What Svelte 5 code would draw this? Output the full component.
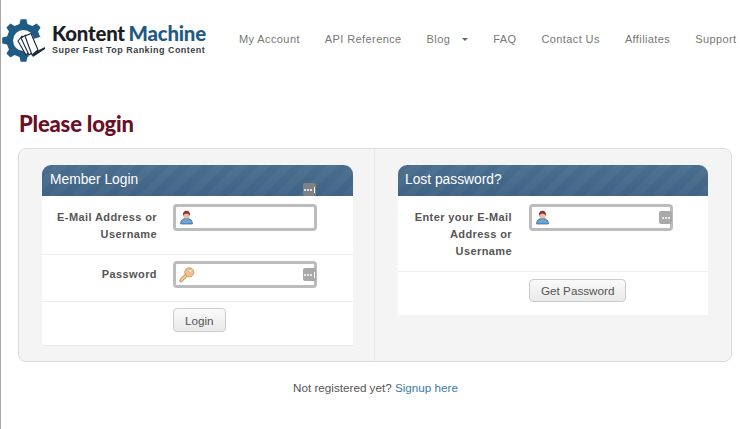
<script>
  const navItems = [
    { label: 'My Account' },
    { label: 'API Reference' },
    { label: 'Blog', caret: true },
    { label: 'FAQ' },
    { label: 'Contact Us' },
    { label: 'Affiliates' },
    { label: 'Support' }
  ]

  // gear outline, 8 teeth round the middle of the logo
  function gearPath(cx, cy, outer, inner, teeth) {
    let d = ''
    const step = (Math.PI * 2) / teeth
    for (let i = 0; i < teeth; i++) {
      const a = i * step - Math.PI / 2
      const pts = [
        [inner, a - step * 0.3],
        [outer, a - step * 0.17],
        [outer, a + step * 0.17],
        [inner, a + step * 0.3]
      ]
      for (const [r, t] of pts) {
        const x = (cx + r * Math.cos(t)).toFixed(1)
        const y = (cy + r * Math.sin(t)).toFixed(1)
        d += (d ? 'L' : 'M') + x + ' ' + y + ' '
      }
    }
    return d + 'Z'
  }

  const gear = gearPath(23.5, 40.5, 21.5, 17, 8)
</script>

{#snippet userIcon()}
  <svg class="field-icon" width="15" height="15" viewBox="0 0 14 14">
    <path d="M1.500 13c0-3.200 1.800-5 5.500-5s5.500 1.800 5.500 5z" fill="#6fa5d2" stroke="#3f6a94" stroke-width=".8" />
    <circle cx="7" cy="5" r="3" fill="#e9bd9f" />
    <path d="M3.700 5.500C3.300 2 5 .6 7 .6s3.700 1.400 3.300 4.900c-.8-1.500-1.600-2-3.300-2s-2.500.5-3.300 2z" fill="#8a3430" />
  </svg>
{/snippet}

{#snippet keyIcon()}
  <svg class="field-icon key" width="16" height="16" viewBox="0 0 14 14">
    <path d="M1.800 11.800 6.500 7" stroke="#d29a62" stroke-width="3.200" stroke-linecap="round" />
    <path d="M1.800 11.800 6.500 7" stroke="#f0cda6" stroke-width="1.400" stroke-linecap="round" />
    <circle cx="9" cy="4.700" r="4" fill="#eebf90" stroke="#cf9660" stroke-width=".8" />
    <circle cx="10" cy="3.700" r="1" fill="#fbe9d4" />
  </svg>
{/snippet}

{#snippet dots(bar)}
  <span class="dots"><i></i><i></i><i></i>{#if bar}<em></em>{/if}</span>
{/snippet}

<div class="page">
  <header class="top">
    <div class="logo">
      <svg class="gear" width="48" height="48" viewBox="0 16 48 48">
        <path d={gear} fill="#1f5b85" />
        <circle cx="23.500" cy="40.500" r="10.500" fill="#fff" />
        <path d="M24 42 46 35 48 60 31 63z" fill="#fff" />
        <g fill="#fff" stroke="#1c2a36" stroke-width="1.100" stroke-linejoin="round">
          <path d="M18 41l4-5 7 16-3 3z" />
          <path d="M21 38l5-3 7 17-4 3z" />
          <path d="M25 36l6-2.500 7 16.500-6 5z" />
        </g>
        <path d="M32 55l5-4 8-4v2l-12 8z" fill="#1c2a36" />
      </svg>
      <div class="logo-text">
        <div class="brand">Kontent <span>Machine</span></div>
        <div class="tagline">Super Fast Top Ranking Content</div>
      </div>
    </div>
    <nav>
      {#each navItems as item}
        <span class="nav-item">{item.label}{#if item.caret}<b class="caret"></b>{/if}</span>
      {/each}
    </nav>
  </header>

  <h1>Please login</h1>

  <section class="panel">
    <div class="col left">
      <div class="card">
        <h2>Member Login</h2>
        <div class="stray">{@render dots(true)}</div>
        <div class="row first">
          <div class="label">E-Mail Address or Username</div>
          <div class="input">{@render userIcon()}</div>
        </div>
        <div class="row second">
          <div class="label">Password</div>
          <div class="input">{@render keyIcon()}{@render dots(true)}</div>
        </div>
        <div class="row actions">
          <button>Login</button>
        </div>
      </div>
    </div>
    <div class="col right">
      <div class="card">
        <h2>Lost password?</h2>
        <div class="row third">
          <div class="label narrow">Enter your E-Mail Address or Username</div>
          <div class="input">{@render userIcon()}{@render dots(false)}</div>
        </div>
        <div class="row actions">
          <button>Get Password</button>
        </div>
      </div>
    </div>
  </section>

  <p class="signup">Not registered yet? <a href="#signup">Signup here</a></p>
</div>

<style>
  :global(body) {
    margin: 0;
    background: #fff;
    font-family: "Liberation Sans", Arial, sans-serif;
  }

  .page {
    box-sizing: border-box;
    width: 740px;
    height: 429px;
    border-left: 1px solid #a8a8a8;
    overflow: hidden;
  }

  .top {
    display: flex;
    align-items: flex-start;
    height: 108px;
  }

  .logo {
    display: flex;
    width: 238px;
    flex: none;
  }

  .gear {
    margin: 16px 0 0 -1px;
    flex: none;
  }

  .logo-text {
    margin: 22px 0 0 4px;
  }

  .brand {
    font-family: Lato, sans-serif;
    font-size: 20.400px;
    line-height: 22px;
    font-weight: 900;
    letter-spacing: -.2px;
    word-spacing: -1px;
    color: #1a1f26;
    white-space: nowrap;
  }

  .brand span {
    color: #1f5b85;
  }

  .tagline {
    margin-top: 1px;
    font-size: 9px;
    line-height: 10px;
    font-weight: 700;
    letter-spacing: .46px;
    color: #3a3f46;
    white-space: nowrap;
  }

  nav {
    display: flex;
    gap: 25px;
    padding-top: 32px;
    white-space: nowrap;
  }

  .nav-item {
    font-size: 11px;
    line-height: 14px;
    letter-spacing: .4px;
    color: #777;
  }

  .caret {
    display: inline-block;
    margin-left: 12px;
    vertical-align: 2px;
    border-top: 3px solid #666;
    border-left: 3px solid transparent;
    border-right: 3px solid transparent;
  }

  h1 {
    height: 35px;
    margin: -2px 0 0 18px;
    font-family: Lato, sans-serif;
    font-size: 22px;
    line-height: 35px;
    font-weight: 900;
    letter-spacing: -.2px;
    color: #6b0f26;
  }

  .panel {
    box-sizing: border-box;
    display: flex;
    width: 714px;
    height: 214px;
    margin: 7px 0 0 17px;
    background: #f4f4f4;
    border: 1px solid #dcdcdc;
    border-radius: 8px;
  }

  .col {
    box-sizing: border-box;
    flex: none;
    padding-top: 16px;
  }

  .col.left {
    width: 356px;
    padding-left: 23px;
    border-right: 1px solid #e8e8e8;
  }

  .col.right {
    padding-left: 23px;
  }

  .card {
    position: relative;
    width: 311px;
    background: #fff;
    border-bottom: 1px solid #e8e8e8;
    border-radius: 9px 9px 0 0;
  }

  .right .card {
    width: 310px;
    border-bottom: 0;
  }

  h2 {
    box-sizing: border-box;
    height: 31px;
    margin: 0;
    padding: 0 8px;
    font-size: 13.800px;
    line-height: 30px;
    font-weight: 400;
    color: #fff;
    border-radius: 9px 9px 0 0;
    background:
      repeating-linear-gradient(-45deg, rgba(255, 255, 255, .035) 0 8px, transparent 8px 16px),
      linear-gradient(#4a6e8e, #3f6384);
  }

  .right h2 {
    padding-left: 7px;
  }

  .stray {
    position: absolute;
    top: 18px;
    left: 261px;
    display: flex;
  }

  .row {
    display: flex;
    align-items: flex-start;
    border-bottom: 1px solid #eee;
    box-sizing: border-box;
  }

  .row.first {
    height: 59px;
    padding-top: 8px;
  }

  .row.second {
    height: 47px;
    padding-top: 6px;
  }

  .row.third {
    height: 76px;
    padding-top: 8px;
  }

  .row.actions {
    border-bottom: 0;
    padding: 6px 0 0 131px;
    height: 43px;
  }

  .right .row.actions {
    padding-top: 7px;
  }

  .label {
    box-sizing: border-box;
    width: 115px;
    margin-top: 5px;
    font-size: 11px;
    line-height: 17px;
    font-weight: 700;
    letter-spacing: .4px;
    text-align: right;
    color: #555;
  }

  .label.narrow {
    width: 114px;
    padding-left: 8px;
  }

  .input {
    box-sizing: border-box;
    position: relative;
    display: flex;
    align-items: center;
    justify-content: space-between;
    width: 144px;
    height: 27px;
    margin-left: 16px;
    padding-left: 3px;
    background: #fff;
    border: 3px solid #bcbcbc;
    border-radius: 4px;
  }

  .right .input {
    margin-left: 17px;
  }

  .field-icon {
    flex: none;
  }

  .dots {
    box-sizing: border-box;
    display: inline-flex;
    align-items: center;
    justify-content: center;
    gap: 1px;
    width: 13px;
    height: 13px;
    background: #a9a9a9;
    border-radius: 2px;
  }

  .input .dots {
    margin-right: -2px;
  }

  .stray .dots {
    background: #7d8288;
  }

  .dots i {
    width: 2px;
    height: 2px;
    border-radius: 50%;
    background: #fff;
  }

  .dots em {
    width: 1px;
    height: 6px;
    margin-left: 1px;
    background: #fff;
  }

  button {
    height: 24px;
    padding: 0 11px;
    font-family: inherit;
    font-size: 11.700px;
    color: #555;
    background: linear-gradient(#fafafa, #e9e9e9);
    border: 1px solid #ccc;
    border-radius: 4px;
  }

  .right button {
    height: 23px;
  }

  .signup {
    margin: 18px 0 0;
    padding-left: 10px;
    font-size: 11.700px;
    line-height: 16px;
    text-align: center;
    color: #555;
  }

  .signup a {
    color: #3a7ca5;
    text-decoration: none;
  }
</style>
